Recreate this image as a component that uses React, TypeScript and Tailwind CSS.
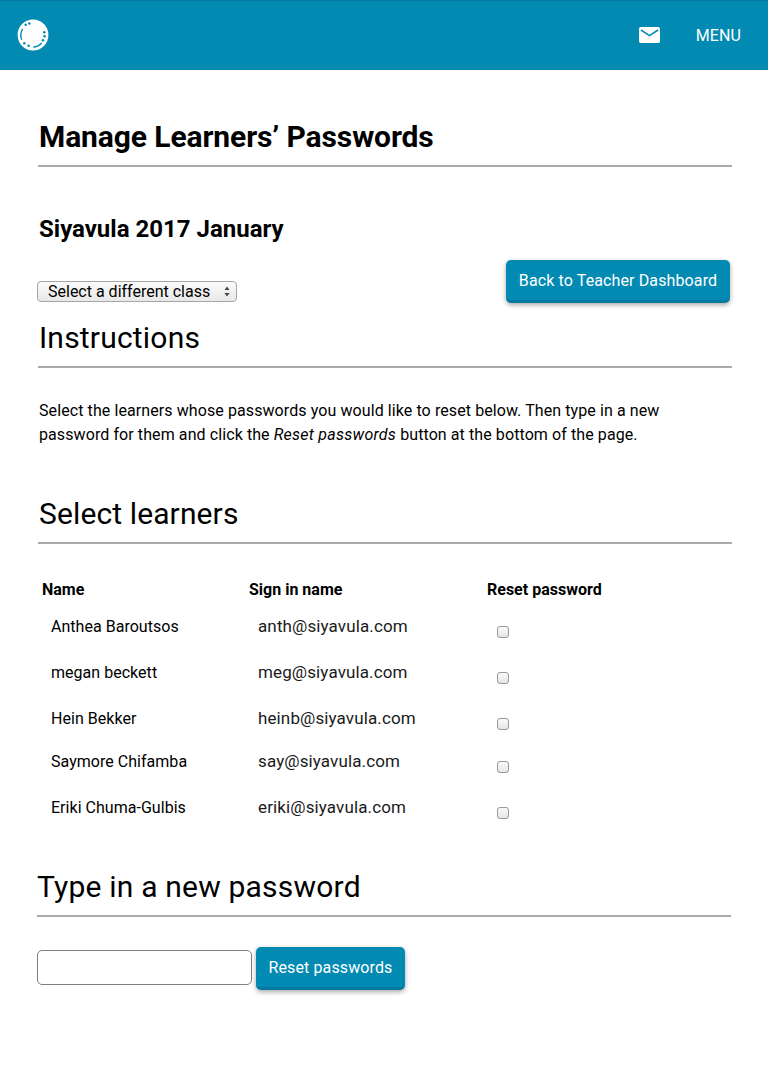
import React from "react";

const rows = [
  { name: "Anthea Baroutsos", email: "anth@siyavula.com", h: "h-[46px]" },
  { name: "megan beckett", email: "meg@siyavula.com", h: "h-[46px]" },
  { name: "Hein Bekker", email: "heinb@siyavula.com", h: "h-[43px]" },
  { name: "Saymore Chifamba", email: "say@siyavula.com", h: "h-[46px]" },
  { name: "Eriki Chuma-Gulbis", email: "eriki@siyavula.com", h: "h-[46px]" },
];

const btn =
  "pt-[2px] rounded-[5px] bg-[#028ab3] border-b-[3px] border-[#027a9f] text-white text-[16px] leading-[20px] tracking-[0.12px] shadow-[0_2px_5px_rgba(0,0,0,0.35)]";

function Logo() {
  return (
    <svg width="32" height="32" viewBox="0 0 32 32" aria-hidden="true">
      <circle cx="16" cy="16" r="15.4" fill="#fff" />
      <path d="M5.7 9.8 A12 12 0 0 0 4.7 20.8" stroke="#028ab3" strokeWidth="1.4" fill="none" />
      <path d="M16.3 28 A12 12 0 0 0 24.7 24" stroke="#028ab3" strokeWidth="1.4" fill="none" />
      {[[8.7, 5.8], [12.3, 4.4], [27.3, 13.2], [27.6, 17.3], [26, 21.3], [7.3, 24.2], [11.6, 26.8]].map(([x, y], i) => (
        <circle key={i} cx={x} cy={y} r="1.25" fill="#028ab3" />
      ))}
    </svg>
  );
}

export default function App() {
  return (
    <div className="w-[768px] h-[1090px] bg-white text-black font-['Roboto',sans-serif]">
      <header className="h-[70px] bg-[#028ab3] border-t border-[#027a9f] flex items-center pl-[17px] pr-[27px] pb-[2px]">
        <Logo />
        <svg className="ml-auto" width="21" height="16" viewBox="0 0 21 16" aria-hidden="true">
          <rect width="21" height="16" rx="1.8" fill="#fff" />
          <path d="M2 3 L10.5 8.6 L19 3" stroke="#028ab3" strokeWidth="1.5" fill="none" />
        </svg>
        <span className="ml-[36px] pt-[2px] text-white text-[16px] leading-none tracking-[0.1px]">MENU</span>
      </header>

      <main className="pl-[38px] pr-[36px]">
        <h1 className="mt-[50px] text-[30px] leading-[34px] font-bold pl-px tracking-[-0.1px] pb-[11px] border-b-2 border-[#aaaaaa]">
          Manage Learners’ Passwords
        </h1>
        <h2 className="mt-[47px] text-[24px] leading-[30px] font-bold pl-px">Siyavula 2017 January</h2>

        <div className="mt-[16px] h-[48px] flex justify-between items-start">
          <div className="relative -ml-px mt-[21px] w-[200px] h-[21px] rounded-[4px] border border-[#a6a6a6] bg-gradient-to-b from-[#fbfbfb] to-[#e8e8e8] flex items-center pl-[10px]">
            <span className="text-[16px] leading-none">Select a different class</span>
            <svg className="absolute right-[6px] top-[4px]" width="6" height="11" viewBox="0 0 6 11" aria-hidden="true">
              <path d="M3 0.5 L5.5 4 L0.5 4 Z M0.5 7 L5.5 7 L3 10.5 Z" fill="#444" />
            </svg>
          </div>
          <button className={`${btn} w-[224px] h-[43px] mr-[2px]`}>Back to Teacher Dashboard</button>
        </div>

        <h2 className="mt-[12px] text-[30px] leading-[36px] pl-px pb-[10px] border-b-2 border-[#aaaaaa] tracking-[0.2px]">Instructions</h2>
        <p className="mt-[31px] text-[16px] leading-[24px] pl-px tracking-[0.09px]">
          Select the learners whose passwords you would like to reset below. Then type in a new
          <br />
          password for them and click the <em className="tracking-[0.25px]">Reset passwords</em> button at the bottom of the page.
        </p>

        <h2 className="mt-[49px] text-[30px] leading-[36px] pl-px pb-[10px] border-b-2 border-[#aaaaaa] tracking-[0.12px]">Select learners</h2>

        <table className="mt-[34px] border-collapse table-fixed w-[694px]">
          <thead>
            <tr className="h-[34px] align-top text-left text-[16px] leading-[24px] font-bold">
              <th className="w-[207px] pl-[4px] font-bold">Name</th>
              <th className="w-[238px] pl-[4px] font-bold">Sign in name</th>
              <th className="pl-[4px] font-bold">Reset password</th>
            </tr>
          </thead>
          <tbody>
            {rows.map((r) => (
              <tr key={r.email} className={`${r.h} align-top`}>
                <td className="pl-[13px] pt-[3px] text-[16px] leading-[24px] tracking-[0.03px]">{r.name}</td>
                <td className="pl-[13px] pt-[2px] text-[17px] leading-[24px] tracking-[0.12px] text-[#1a1a1a]">{r.email}</td>
                <td className="pl-[14px] pt-[14px]">
                  <input
                    type="checkbox"
                    aria-label={`Reset password for ${r.name}`}
                    className="block appearance-none w-3 h-3 rounded-[3px] border border-[#999999] bg-gradient-to-b from-[#fafafa] to-[#e6e6e6]"
                  />
                </td>
              </tr>
            ))}
          </tbody>
        </table>

        <h2 className="mt-[30px] -ml-px mr-px text-[30px] leading-[36px] pb-[10px] border-b-2 border-[#aaaaaa] tracking-[0.2px]">Type in a new password</h2>

        <div className="mt-[30px] -ml-px flex items-start gap-[4px]">
          <input aria-label="New password" className="mt-[3px] w-[215px] h-[35px] rounded-[5px] border border-[#808080] bg-white" />
          <button className={`${btn} w-[149px] h-[43px]`}>Reset passwords</button>
        </div>
      </main>
    </div>
  );
}
